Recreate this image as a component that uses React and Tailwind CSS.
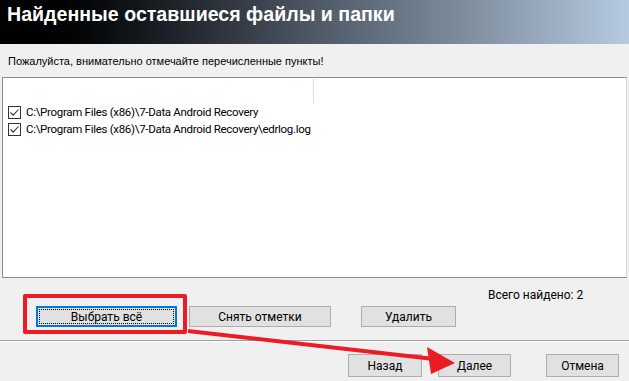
import React from "react";

function Check() {
  return (
    <span className="w-[13px] h-[13px] border border-[#333] bg-white flex items-center justify-center shrink-0">
      <svg width="11" height="11" viewBox="0 0 11 11">
        <path d="M1.5 5.5 L4.2 8.2 L9.5 2.5" fill="none" stroke="#333" strokeWidth="1.1" />
      </svg>
    </span>
  );
}

function Btn({ w, children, focus }) {
  return (
    <div
      className={
        "h-[21px] flex items-center justify-center text-[12px] text-black bg-[#e1e1e1] " +
        (focus ? "border-2 border-[#0078d7] p-[1px]" : "border border-[#adadad]")
      }
      style={{ width: w }}
    >
      {focus ? (
        <div className="w-full h-full border border-dotted border-black flex items-center justify-center">
          {children}
        </div>
      ) : (
        children
      )}
    </div>
  );
}

function Btn2({ w, children }) {
  return (
    <div
      className="h-[23px] flex items-center justify-center text-[12px] text-black bg-[#e1e1e1] border border-[#adadad]"
      style={{ width: w }}
    >
      {children}
    </div>
  );
}

export default function App() {
  return (
    <div className="relative w-[629px] h-[381px] overflow-hidden bg-[#f0f0f0] font-['Roboto',Arial,sans-serif] text-black">
      <div className="h-[44px] bg-gradient-to-r from-[#000000] via-[#4f5966] to-[#b6cbe0] px-[7px] pt-[2px]">
        <div className="text-white font-bold text-[19.6px] leading-[25px] font-['Liberation_Sans',Arial,sans-serif]">Найденные оставшиеся файлы и папки</div>
      </div>
      <div className="h-[33px] pl-[8px] pt-[10px] text-[11px] leading-[14px] font-['Liberation_Sans',Arial,sans-serif]">
        Пожалуйста, внимательно отмечайте перечисленные пункты!
      </div>
      <div className="ml-[2px] mr-[2px] h-[201px] bg-white border border-[#8c8c8c] border-r-[#d8d8d8]">
        <div className="h-[26px] pt-[1px] pl-[310px]">
          <div className="w-[1px] h-[24px] bg-[#dcdcdc]" />
        </div>
        <div className="flex flex-col text-[11.5px] tracking-[-0.3px]">
          <div className="h-[17px] flex items-center gap-[5px] pl-[5px]">
            <Check />
            <span>C:\Program Files (x86)\7-Data Android Recovery</span>
          </div>
          <div className="h-[17px] flex items-center gap-[5px] pl-[5px]">
            <Check />
            <span>C:\Program Files (x86)\7-Data Android Recovery\edrlog.log</span>
          </div>
        </div>
      </div>
      <div className="h-[62px]">
        <div className="h-[27px] pt-[10px] pl-[488px] text-[12px] leading-[14px]">Всего найдено: 2</div>
        <div className="flex pl-[36px] pt-[1px]">
          <Btn w={141} focus>Выбрать всё</Btn>
          <div className="ml-[12px]"><Btn w={142}>Снять отметки</Btn></div>
          <div className="ml-[30px]"><Btn w={95}>Удалить</Btn></div>
        </div>
      </div>
      <div className="h-[1px] bg-[#a0a0a0]" />
      <div className="h-[1px] bg-[#ffffff]" />
      <div className="flex pl-[348px] pt-[12px]">
        <Btn2 w={74}>Назад</Btn2>
        <div className="ml-[16px]"><Btn2 w={73}>Далее</Btn2></div>
        <div className="ml-[35px]"><Btn2 w={73}>Отмена</Btn2></div>
      </div>
      <div className="absolute left-[23px] top-[294px] w-[164px] h-[40px] border-[4px] border-[#ec1c24] rounded-[2px]" />
      <svg className="absolute left-0 top-0" width="629" height="381" viewBox="0 0 629 381">
        <line x1="188" y1="331" x2="434" y2="359" stroke="#ec1c24" strokeWidth="4" />
        <polygon points="427,347 455,363 431,374" fill="#ec1c24" />
      </svg>
    </div>
  );
}
